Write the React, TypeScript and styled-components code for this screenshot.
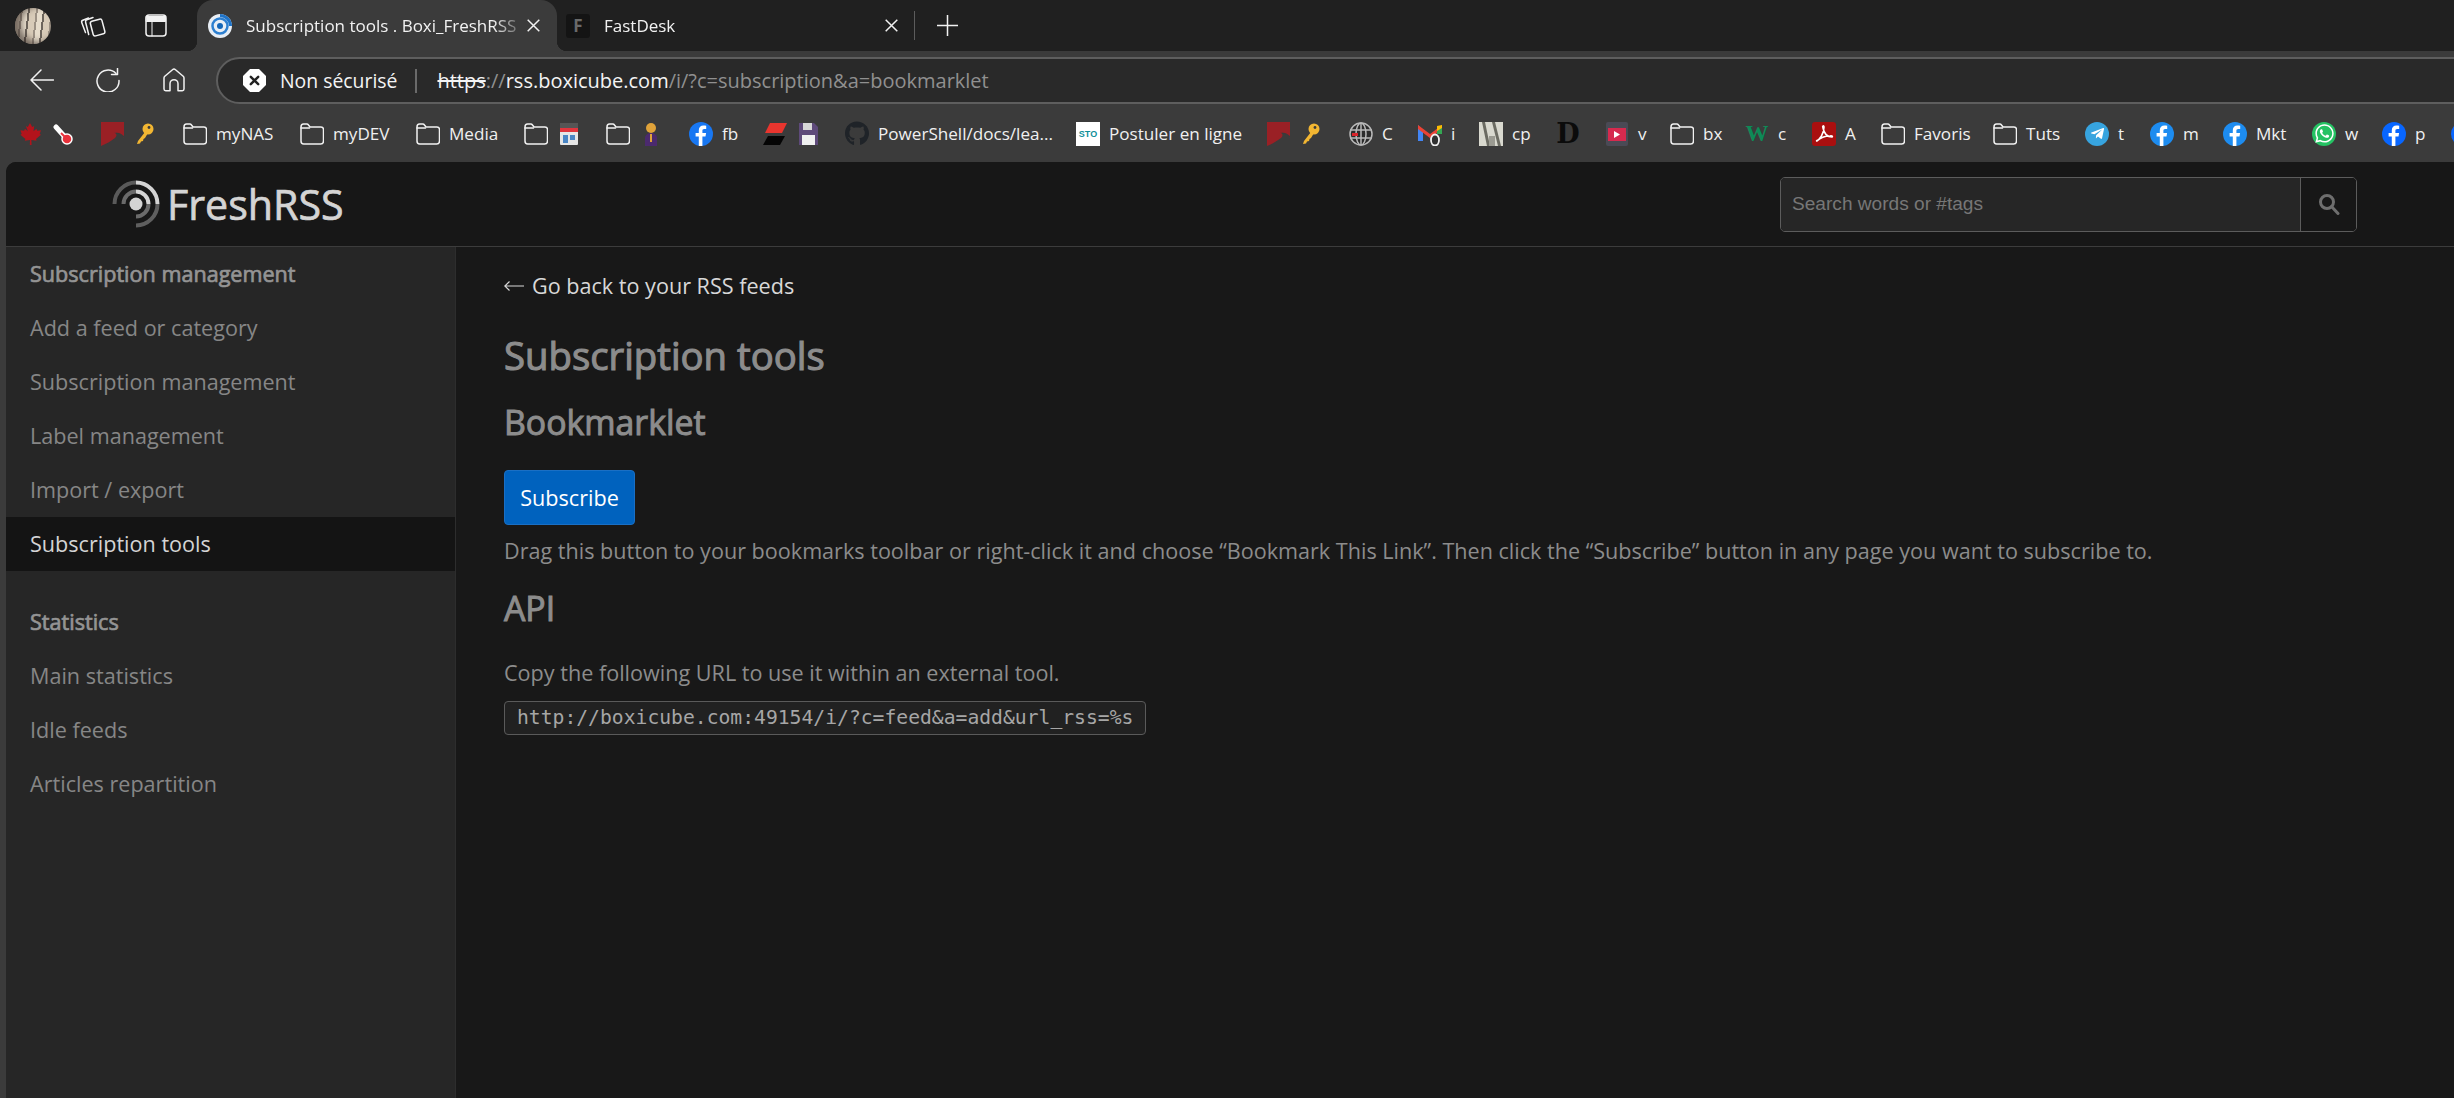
import React from 'react';
import styled, { createGlobalStyle } from 'styled-components';
import { FaGithub, FaWhatsapp, FaTelegramPlane } from 'react-icons/fa';

const GlobalStyle = createGlobalStyle`
  html, body {
    margin: 0;
    padding: 0;
    background: #3b3b3b;
    overflow: hidden;
  }
`;

const Shell = styled.div`
  width: 2454px;
  height: 1098px;
  display: flex;
  flex-direction: column;
  overflow: hidden;
  background: #3b3b3b;
  font-family: "Open Sans", sans-serif;
`;

/* browser chrome */
const TabStrip = styled.div`
  flex: 0 0 51px;
  background: #202020;
  display: flex;
  align-items: center;
  padding-left: 15px;
`;
const Avatar = styled.div`
  width: 36px;
  height: 36px;
  margin-top: 1px;
  border-radius: 50%;
  background: repeating-linear-gradient(97deg, #d8cbb8 0 6px, #9c9184 6px 8px, #e6dccb 8px 13px, #6d655c 13px 15px);
  box-shadow: inset 6px -2px 6px rgba(40, 30, 25, .55);
`;
const StripButton = styled.div<{ $w: number }>`
  flex: 0 0 ${({ $w }) => $w}px;
  display: flex;
  justify-content: center;
  align-items: center;
`;
const ActiveTab = styled.div`
  position: relative;
  flex: 0 0 360px;
  height: 51px;
  margin-left: 21px;
  background: #3b3b3b;
  border-radius: 16px 16px 0 0;
  display: flex;
  align-items: center;
  padding: 0 17px 0 11px;
  box-sizing: border-box;
  &::before, &::after {
    content: '';
    position: absolute;
    bottom: 0;
    width: 10px;
    height: 10px;
  }
  &::before {
    left: -10px;
    background: radial-gradient(circle at 0 0, transparent 10px, #3b3b3b 10.5px);
  }
  &::after {
    right: -10px;
    background: radial-gradient(circle at 100% 0, transparent 10px, #3b3b3b 10.5px);
  }
`;
const TabTitle = styled.div`
  flex: 1;
  margin-left: 14px;
  font-size: 17px;
  color: #f2f2f2;
  white-space: nowrap;
  overflow: hidden;
  -webkit-mask-image: linear-gradient(90deg, #000 88%, transparent 100%);
  mask-image: linear-gradient(90deg, #000 88%, transparent 100%);
`;
const Tab = styled.div`
  flex: 0 0 343px;
  height: 51px;
  display: flex;
  align-items: center;
  padding: 0 2px 0 9px;
  box-sizing: border-box;
`;
const TabDivider = styled.div`
  width: 1px;
  height: 29px;
  margin-left: 14px;
  background: #5c5c5c;
`;
const NewTab = styled.div`
  margin-left: 22px;
  display: flex;
`;
const FastIcon = styled.div`
  width: 24px;
  height: 24px;
  border-radius: 3px;
  background: #141414;
  color: #6a6a6a;
  font: 700 17px "Open Sans", sans-serif;
  line-height: 24px;
  text-align: center;
`;

const Toolbar = styled.div`
  flex: 0 0 54px;
  display: flex;
  align-items: flex-start;
  padding-left: 30px;
  background: #3b3b3b;
`;
const ToolButton = styled.div<{ $w: number }>`
  flex: 0 0 ${({ $w }) => $w}px;
  height: 54px;
  padding-top: 4px;
  box-sizing: border-box;
  display: flex;
  align-items: center;
`;
const AddressBar = styled.div`
  flex: 1;
  height: 47px;
  margin-top: 6px;
  margin-right: -40px;
  box-sizing: border-box;
  background: #292929;
  border: 2px solid #5e5e5e;
  border-radius: 24px;
  display: flex;
  align-items: center;
  padding-left: 25px;
  font-size: 20px;
  white-space: nowrap;
`;
const SecurityLabel = styled.span`
  margin-left: 14px;
  font-size: 19.4px;
  color: #f4f4f4;
`;
const AddressDivider = styled.span`
  width: 2px;
  height: 24px;
  background: #6a6a6a;
  margin: 0 20px 0 18px;
`;
const UrlProtocol = styled.span`
  color: #f4f4f4;
  text-decoration: line-through;
  text-decoration-color: #f4f4f4;
`;
const UrlMuted = styled.span`
  color: #909090;
`;
const UrlHost = styled.span`
  color: #f4f4f4;
`;

const Bookmarks = styled.div`
  flex: 0 0 57px;
  display: flex;
  align-items: center;
  padding-left: 18px;
  background: #3b3b3b;
  overflow: hidden;
`;
const Bookmark = styled.div<{ $w: number }>`
  flex: 0 0 ${({ $w }) => $w}px;
  display: flex;
  align-items: center;
  gap: 9px;
  font-size: 17.1px;
  color: #f0f0f0;
  white-space: nowrap;
`;
const IconBox = styled.span`
  flex: 0 0 24px;
  width: 24px;
  height: 24px;
  display: flex;
  align-items: center;
  justify-content: center;
`;
const RoundIcon = styled.span<{ $bg: string }>`
  display: flex;
  width: 24px;
  height: 24px;
  border-radius: 12px;
  background: ${({ $bg }) => $bg};
  align-items: center;
  justify-content: center;
`;
const StoIcon = styled.span`
  width: 24px;
  height: 24px;
  background: #fff;
  color: #0f8f9a;
  font: 700 9px "Liberation Sans", sans-serif;
  line-height: 24px;
  text-align: center;
`;
const DIcon = styled.span`
  font: 900 27px "DejaVu Serif", serif;
  line-height: 24px;
  color: #0b0b0b;
`;
const WIcon = styled.span`
  font: 700 23px "Liberation Serif", serif;
  line-height: 24px;
  color: #0e8a57;
`;

/* FreshRSS page */
const Page = styled.div`
  flex: 1;
  min-height: 0;
  margin-left: 6px;
  border-radius: 10px 0 0 0;
  background: #181818;
  overflow: hidden;
  display: flex;
  flex-direction: column;
`;
const Header = styled.header`
  flex: 0 0 84px;
  background: #171717;
  border-bottom: 1px solid #3c3c3c;
  display: flex;
  align-items: center;
  justify-content: space-between;
  padding: 0 97px 0 105px;
`;
const Logo = styled.div`
  display: flex;
  align-items: center;
  gap: 6px;
  margin-top: -1px;
`;
const LogoText = styled.span`
  font-size: 41.2px;
  font-weight: 400;
  color: #d4d4d4;
  line-height: 48px;
  -webkit-text-stroke: 0.7px #d4d4d4;
`;
const SearchBox = styled.div`
  width: 577px;
  height: 55px;
  box-sizing: border-box;
  border: 1px solid #5c5c5c;
  border-radius: 5px;
  display: flex;
  overflow: hidden;
`;
const SearchInput = styled.div`
  flex: 1;
  background: #262626;
  color: #777;
  font: 19.1px "Liberation Sans", sans-serif;
  display: flex;
  align-items: center;
  padding-left: 11px;
`;
const SearchButton = styled.div`
  flex: 0 0 55px;
  border-left: 1px solid #5c5c5c;
  background: #171717;
  display: flex;
  align-items: center;
  justify-content: center;
`;
const Body = styled.div`
  flex: 1;
  min-height: 0;
  display: flex;
`;
const Sidebar = styled.nav`
  flex: 0 0 450px;
  background: #262626;
  border-right: 1px solid #2d2d2d;
  box-sizing: border-box;
`;
const SideSection = styled.div`
  margin-bottom: 24px;
`;
const SideTitle = styled.div`
  height: 54px;
  line-height: 54px;
  padding-left: 24px;
  font-size: 21.6px;
  color: #949494;
  -webkit-text-stroke: 0.7px #949494;
`;
const SideItem = styled.div<{ $active?: boolean }>`
  height: 54px;
  line-height: 54px;
  padding-left: 24px;
  font-size: 21.6px;
  color: ${({ $active }) => ($active ? '#d4d4d4' : '#868686')};
  background: ${({ $active }) => ($active ? '#141414' : 'transparent')};
`;
const Content = styled.main`
  flex: 1;
  padding: 12px 48px;
`;
const BackLink = styled.div`
  display: flex;
  align-items: center;
  gap: 8px;
  font-size: 21.6px;
  line-height: 54px;
  color: #d8d8d8;
`;
const Title = styled.h1`
  margin: 13.5px 0 0;
  font-size: 38.3px;
  line-height: 56px;
  font-weight: 400;
  color: #8c8c8c;
  -webkit-text-stroke: 1.1px #8c8c8c;
`;
const SubTitle = styled.h2`
  margin: 15px 0 0;
  font-size: 33.8px;
  line-height: 48px;
  font-weight: 400;
  color: #8c8c8c;
  -webkit-text-stroke: 1px #8c8c8c;
`;
const SubscribeButton = styled.div`
  width: 131px;
  height: 55px;
  margin-top: 24px;
  box-sizing: border-box;
  background: #0062be;
  border: 1px solid #1a6fc4;
  border-radius: 4px;
  color: #fff;
  font-size: 21.6px;
  display: flex;
  align-items: center;
  justify-content: center;
`;
const Paragraph = styled.p<{ $top: number }>`
  margin: ${({ $top }) => $top}px 0 0;
  font-size: 21.6px;
  line-height: 36px;
  color: #8c8c8c;
`;
const CodeBox = styled.code`
  display: inline-block;
  margin-top: 10px;
  padding: 0 12px;
  height: 34px;
  line-height: 32px;
  box-sizing: border-box;
  border: 1px solid #5a5a5a;
  border-radius: 4px;
  background: #212121;
  color: #a6a6a6;
  font-family: "DejaVu Sans Mono", monospace;
  font-size: 19.7px;
  white-space: nowrap;
`;

/* drawings */
const line = { fill: 'none', stroke: '#f2f2f2', strokeWidth: 1.5, strokeLinecap: 'round', strokeLinejoin: 'round' } as const;

const CollectionsIcon = () => (
  <svg width="26" height="26" viewBox="0 0 26 26" {...line}>
    <path d="M5.500 19.500 1.800 9.700c-.4-1 .1-2 1-2.400L8.500 5" />
    <path d="M8.700 21.500 5.600 9.200c-.3-1.100.2-2 1.200-2.400L13 4.500" />
    <path d="M11.800 8.200 19.500 6.200c1.200-.3 2.200.3 2.500 1.400l2.800 10.700c.3 1.200-.3 2.200-1.400 2.500l-7.700 2.100c-1.200.3-2.200-.3-2.500-1.400L10.400 10.700c-.3-1.200.3-2.200 1.400-2.500z" />
  </svg>
);
const SideTabIcon = () => (
  <svg width="22" height="23" viewBox="0 0 22 23" {...line}>
    <rect x="1" y="1" width="20" height="21" rx="3" />
    <path d="M1.500 2.500h19v5h-19zM7 7v15" fill="#f2f2f2" strokeWidth="1" />
  </svg>
);
const RssFavicon = () => (
  <svg width="24" height="24" viewBox="0 0 24 24">
    <circle cx="12" cy="12" r="12" fill="#e8eef5" />
    <path d="M12 0a12 12 0 0 1 12 12h-3a9 9 0 0 0-9-9z" fill="#1f74c9" />
    <circle cx="12" cy="12" r="7.500" fill="none" stroke="#2c7fd0" strokeWidth="2.500" />
    <circle cx="12" cy="12" r="3" fill="#1466b8" />
  </svg>
);
const CloseIcon = () => (
  <svg width="13" height="13" viewBox="0 0 13 13" {...line} strokeLinecap="butt">
    <path d="m.7.7 11.600 11.600M12.300.7.7 12.300" />
  </svg>
);
const PlusIcon = () => (
  <svg width="21" height="21" viewBox="0 0 21 21" {...line} strokeLinecap="butt">
    <path d="M10.500 0v21M0 10.500h21" />
  </svg>
);
const BackIcon = () => (
  <svg width="24" height="22" viewBox="0 0 24 22" {...line}>
    <path d="M1 11h22.500M11 1 1 11l10 10" />
  </svg>
);
const ReloadIcon = () => (
  <svg width="24" height="24" viewBox="0 0 24 24" {...line}>
    <path d="M20 5.500A11 11 0 1 0 23 12.500" />
    <path d="M21.500 .5v6h-6" />
  </svg>
);
const HomeIcon = () => (
  <svg width="22" height="24" viewBox="0 0 22 24" {...line}>
    <path d="M9.500 1.700 1.800 8.300c-.5.500-.8 1-.8 1.700v11c0 1 .8 1.700 1.700 1.700H7v-7a4 4 0 0 1 8 0v7h4.300c.9 0 1.700-.7 1.700-1.700V10c0-.7-.3-1.200-.8-1.700l-7.700-6.600a2.300 2.300 0 0 0-3 0z" />
  </svg>
);
const InsecureIcon = () => (
  <svg width="23" height="23" viewBox="0 0 23 23">
    <path d="M7 0h9l7 7v9l-7 7H7l-7-7V7z" fill="#fff" />
    <path d="m7.800 7.800 7.400 7.400M15.200 7.800l-7.400 7.400" stroke="#222" strokeWidth="2.400" strokeLinecap="round" />
  </svg>
);
const ThinArrow = () => (
  <svg width="20" height="12" viewBox="0 0 20 12" fill="none" stroke="#d8d8d8" strokeWidth="1.200">
    <path d="M0.500 6H20M5.500 1.500 0.800 6l4.700 4.500" />
  </svg>
);
const SearchIcon = () => (
  <svg width="22" height="22" viewBox="0 0 22 22" fill="none" stroke="#6e6e6e" strokeWidth="3">
    <circle cx="9" cy="9" r="6.500" />
    <path d="m13.500 13.500 6.500 7" strokeLinecap="round" />
  </svg>
);
const FreshLogo = () => (
  <svg width="50" height="50" viewBox="0 0 50 50" fill="none">
    <circle cx="25" cy="25" r="6.500" fill="#d4d4d4" />
    <path d="M25 3.500A21.500 21.500 0 0 0 3.500 25" stroke="#5a5a5a" strokeWidth="4" />
    <path d="M25 3.500A21.500 21.500 0 0 1 46.500 25" stroke="#d4d4d4" strokeWidth="4" />
    <path d="M46.500 25A21.500 21.500 0 0 1 25 46.500" stroke="#5f5f5f" strokeWidth="4" />
    <path d="M25 12.500A12.500 12.500 0 0 0 12.500 25" stroke="#6a6a6a" strokeWidth="4" />
    <path d="M25 12.500A12.500 12.500 0 0 1 37.500 25" stroke="#d4d4d4" strokeWidth="4" />
    <path d="M37.500 25A12.500 12.500 0 0 1 25 37.500" stroke="#6a6a6a" strokeWidth="4" />
  </svg>
);

const FolderGlyph = () => (
  <svg width="24" height="22" viewBox="0 0 24 22" {...line}>
    <path d="M1 4c0-1.700 1-3 2.500-3h3.300c.7 0 1.200.3 1.700 1l1.500 2h11c1.400 0 2.500 1 2.500 2.500V18c0 1.600-1.100 3-2.800 3H3.700C2 21 1 19.600 1 18z" />
    <path d="M1 5h8.500" />
  </svg>
);
const Facebook = ({ bg }: { bg: string }) => (
  <svg width="24" height="24" viewBox="0 0 24 24">
    <circle cx="12" cy="12" r="12" fill={bg} />
    <path d="M13.400 24v-9.500h3.100l.6-3.600h-3.700V8.700c0-1 .4-1.800 1.900-1.800h1.900V3.700c-.9-.1-1.800-.2-2.700-.2-2.900 0-4.700 1.700-4.700 4.800v2.600H6.600v3.600h3.200V24z" fill="#fff" />
  </svg>
);

const icons: Record<string, React.ReactNode> = {
  folder: <FolderGlyph />,
  maple: (
    <svg width="24" height="24" viewBox="0 0 24 24"><path d="m12 1 2.200 4 2-1-.7 5.300 2.900-2.600.9 2 3.700-.5-1.300 3.800 1.300.8-5 4.200.6 1.800-5.200-.7.200 5h-1.800l.2-5-5.200.7.6-1.800-5-4.200 1.300-.8-1.300-3.800 3.700.5.900-2 2.900 2.600L7.800 4l2 1z" fill="#b3131b" /></svg>
  ),
  thermo: (
    <svg width="20" height="22" viewBox="0 0 20 22"><path d="M3 4 12 14" stroke="#fff" strokeWidth="5" strokeLinecap="round" /><circle cx="14" cy="16" r="5" fill="#e8303a" stroke="#fff" strokeWidth="1.500" /><path d="M8 10l5 5" stroke="#e8303a" strokeWidth="2" /></svg>
  ),
  redflag: (
    <svg width="24" height="24" viewBox="0 0 24 24"><path d="M1 0h23v16c-2-4-6-6-9-5 2 1 2 3 0 5-4 3-9 6-14 8z" fill="#9a2025" /><path d="M14 11c3-1 7 1 10 5v-2c-3-3-7-4-10-3z" fill="#3b3b3b" /></svg>
  ),
  key: (
    <svg width="18" height="22" viewBox="0 0 18 22"><circle cx="12" cy="6" r="5.500" fill="#f2b632" /><circle cx="13" cy="4.500" r="1.400" fill="#3b3b3b" /><path d="M9 9 2 18l-1 3 3-.5 1-2 2-.5.500-2 1.500-1L12 10z" fill="#f2b632" /></svg>
  ),
  store: (
    <svg width="18" height="24" viewBox="0 0 18 24"><rect y="1" width="18" height="22" rx="1" fill="#e6e6e6" /><rect y="1" width="18" height="5" fill="#555" /><rect y="6" width="18" height="4" fill="#e0353d" /><rect x="3" y="13" width="5" height="8" fill="#4a86c5" /><rect x="10" y="13" width="5" height="5" fill="#4a86c5" /></svg>
  ),
  person: (
    <svg width="18" height="24" viewBox="0 0 18 24"><circle cx="9" cy="6" r="5" fill="#e0a33a" /><path d="M3 24v-8c0-3 3-5 6-5s6 2 6 5v8z" fill="#4b2a6e" /><path d="M8 12h2v8H8z" fill="#e0a33a" /></svg>
  ),
  fb: <Facebook bg="#1877f2" />,
  fbLight: <Facebook bg="#1d8cf0" />,
  fbDeep: <Facebook bg="#0866ff" />,
  slash: (
    <svg width="24" height="24" viewBox="0 0 24 24"><path d="M7 1h17l-5 10H2z" fill="#e8352e" /><path d="M5 14h17l-5 9H0z" fill="#050505" /></svg>
  ),
  floppy: (
    <svg width="19" height="24" viewBox="0 0 19 24"><path d="M0 1h15l4 4v18H0z" fill="#5e4a7a" /><rect x="4" y="1" width="9" height="7" fill="#d8d8d8" /><rect x="3" y="13" width="13" height="10" fill="#f0f0f0" /></svg>
  ),
  github: <FaGithub size={25} color="#1f2328" />,
  sto: <StoIcon>STO</StoIcon>,
  globe: (
    <svg width="24" height="24" viewBox="0 0 24 24" fill="none" stroke="#b8b8b8" strokeWidth="1.500"><circle cx="12" cy="12" r="11" fill="#2a2a2a" /><ellipse cx="12" cy="12" rx="5" ry="11" /><path d="M12 1v22M1 8h22M1 16h22" /><path d="M3 11h6v3H3z" fill="#d8232a" stroke="none" /></svg>
  ),
  gmail: (
    <svg width="24" height="24" viewBox="0 0 24 24"><path d="M0 3v16h5V9z" fill="#4285f4" /><path d="M0 3l12 9 12-9v4L12 16 0 7z" fill="#ea4335" /><path d="M19 9l5-4v7h-5z" fill="#34a853" /><path d="M19 4l5-1v3l-5 3z" fill="#fbbc04" /><ellipse cx="17" cy="18" rx="4" ry="5.500" fill="#303030" stroke="#f0f0f0" strokeWidth="1.800" /></svg>
  ),
  photo: (
    <svg width="24" height="24" viewBox="0 0 24 24"><rect width="24" height="24" fill="#d9d9cf" /><path d="M3 0l5 24h3L6 0zM13 0l6 24h3L16 0z" fill="#6b6b62" /><path d="M10 14h6v10h-6z" fill="#9b9b92" /></svg>
  ),
  d: <DIcon>D</DIcon>,
  video: (
    <svg width="22" height="24" viewBox="0 0 22 24"><rect width="22" height="24" rx="2" fill="#4a4a55" /><rect x="2" y="6" width="18" height="13" fill="#d62a4e" /><path d="m8 9 6 3.500L8 16z" fill="#fff" /></svg>
  ),
  w: <WIcon>W</WIcon>,
  pdf: (
    <svg width="24" height="24" viewBox="0 0 24 24"><rect width="24" height="24" rx="3" fill="#a90f0f" /><path d="M4 19c4-1 8-8 8-14 0-2-2-1-1 1 1 5 4 9 9 9 1 0 0-2-2-1-5 0-10 2-13 5z" fill="none" stroke="#fff" strokeWidth="1.600" /></svg>
  ),
  telegram: <RoundIcon $bg="#37a4df"><FaTelegramPlane size={15} color="#fff" /></RoundIcon>,
  whatsapp: <RoundIcon $bg="#25c263"><FaWhatsapp size={21} color="#fff" /></RoundIcon>,
};

// start-to-start widths are taken from the screenshot
const bookmarks: { icon: string; label?: React.ReactNode; w: number; second?: string }[] = [
  { icon: 'maple', second: 'thermo', w: 82 },
  { icon: 'redflag', second: 'key', w: 83 },
  { icon: 'folder', label: 'myNAS', w: 117 },
  { icon: 'folder', label: 'myDEV', w: 116 },
  { icon: 'folder', label: 'Media', w: 108 },
  { icon: 'folder', second: 'store', w: 82 },
  { icon: 'folder', second: 'person', w: 83 },
  { icon: 'fb', label: 'fb', w: 74 },
  { icon: 'slash', second: 'floppy', w: 82 },
  { icon: 'github', label: 'PowerShell/docs/lea...', w: 231 },
  { icon: 'sto', label: 'Postuler en ligne', w: 190 },
  { icon: 'redflag', second: 'key', w: 83 },
  { icon: 'globe', label: 'C', w: 69 },
  { icon: 'gmail', label: 'i', w: 61 },
  { icon: 'photo', label: 'cp', w: 77 },
  { icon: 'd', w: 49 },
  { icon: 'video', label: 'v', w: 65 },
  { icon: 'folder', label: 'bx', w: 75 },
  { icon: 'w', label: 'c', w: 67 },
  { icon: 'pdf', label: 'A', w: 69 },
  { icon: 'folder', label: 'Favoris', w: 112 },
  { icon: 'folder', label: 'Tuts', w: 92 },
  { icon: 'telegram', label: 't', w: 65 },
  { icon: 'fbLight', label: 'm', w: 73 },
  { icon: 'fbLight', label: 'Mkt', w: 89 },
  { icon: 'whatsapp', label: 'w', w: 70 },
  { icon: 'fbDeep', label: 'p', w: 69 },
  { icon: 'fbDeep', w: 24 },
];

const managementItems = ['Add a feed or category', 'Subscription management', 'Label management', 'Import / export'];
const statisticsItems = ['Main statistics', 'Idle feeds', 'Articles repartition'];

export default function App() {
  return (
    <Shell>
      <GlobalStyle />
      <TabStrip>
        <Avatar />
        <StripButton $w={84}><CollectionsIcon /></StripButton>
        <StripButton $w={41}><SideTabIcon /></StripButton>
        <ActiveTab>
          <RssFavicon />
          <TabTitle>Subscription tools . Boxi_FreshRSS</TabTitle>
          <CloseIcon />
        </ActiveTab>
        <Tab>
          <FastIcon>F</FastIcon>
          <TabTitle>FastDesk</TabTitle>
          <CloseIcon />
        </Tab>
        <TabDivider />
        <NewTab><PlusIcon /></NewTab>
      </TabStrip>
      <Toolbar>
        <ToolButton $w={66}><BackIcon /></ToolButton>
        <ToolButton $w={67}><ReloadIcon /></ToolButton>
        <ToolButton $w={53}><HomeIcon /></ToolButton>
        <AddressBar>
          <InsecureIcon />
          <SecurityLabel>Non sécurisé</SecurityLabel>
          <AddressDivider />
          <UrlProtocol>https</UrlProtocol>
          <UrlMuted>://</UrlMuted>
          <UrlHost>rss.boxicube.com</UrlHost>
          <UrlMuted>/i/?c=subscription&amp;a=bookmarklet</UrlMuted>
        </AddressBar>
      </Toolbar>
      <Bookmarks>
        {bookmarks.map((b, i) => (
          <Bookmark key={i} $w={b.w}>
            <IconBox>{icons[b.icon]}</IconBox>
            {b.second && <IconBox>{icons[b.second]}</IconBox>}
            {b.label}
          </Bookmark>
        ))}
      </Bookmarks>
      <Page>
        <Header>
          <Logo>
            <FreshLogo />
            <LogoText>FreshRSS</LogoText>
          </Logo>
          <SearchBox>
            <SearchInput>Search words or #tags</SearchInput>
            <SearchButton><SearchIcon /></SearchButton>
          </SearchBox>
        </Header>
        <Body>
          <Sidebar>
            <SideSection>
              <SideTitle>Subscription management</SideTitle>
              {managementItems.map(item => <SideItem key={item}>{item}</SideItem>)}
              <SideItem $active>Subscription tools</SideItem>
            </SideSection>
            <SideSection>
              <SideTitle>Statistics</SideTitle>
              {statisticsItems.map(item => <SideItem key={item}>{item}</SideItem>)}
            </SideSection>
          </Sidebar>
          <Content>
            <BackLink><ThinArrow />Go back to your RSS feeds</BackLink>
            <Title>Subscription tools</Title>
            <SubTitle>Bookmarklet</SubTitle>
            <SubscribeButton>Subscribe</SubscribeButton>
            <Paragraph $top={8.5}>Drag this button to your bookmarks toolbar or right-click it and choose “Bookmark This Link”. Then click the “Subscribe” button in any page you want to subscribe to.</Paragraph>
            <SubTitle>API</SubTitle>
            <Paragraph $top={22.5}>Copy the following URL to use it within an external tool.</Paragraph>
            <CodeBox>http://boxicube.com:49154/i/?c=feed&amp;a=add&amp;url_rss=%s</CodeBox>
          </Content>
        </Body>
      </Page>
    </Shell>
  );
}
